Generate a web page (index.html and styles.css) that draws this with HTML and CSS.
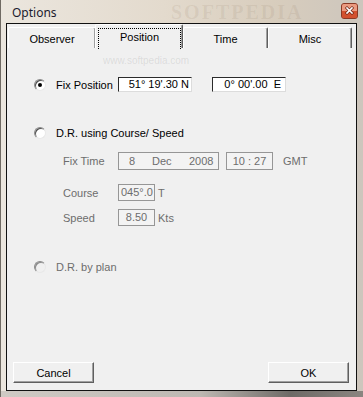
FILE: index.html
```html
<!DOCTYPE html>
<html lang="en">
<head>
  <meta charset="UTF-8">
  <meta name="viewport" content="width=device-width, initial-scale=1.0">
  <title>Options</title>
  <link rel="stylesheet" href="styles.css">
</head>
<body>
  <div class="window">
    <div class="titlebar">
      <span class="title">Options</span>
      <span class="watermark">SOFTPEDIA</span>
      <div class="close">
        <svg width="15" height="14" viewBox="0 0 15 14">
          <rect x="0" y="0" width="15" height="7" fill="#eb9a80"/>
          <rect x="0" y="7" width="15" height="7" fill="#d2512f"/>
          <path d="M5 4 L10 9 M10 4 L5 9" stroke="#6a2414" stroke-width="3" stroke-linecap="square"/>
          <path d="M5 4 L10 9 M10 4 L5 9" stroke="#fff" stroke-width="1.6" stroke-linecap="square"/>
        </svg>
      </div>
    </div>

    <div class="client">
      <div class="tabs">
        <div class="tab tab-first">Observer</div>
        <div class="tab tab-selected"><span class="focus">Position</span></div>
        <div class="tab">Time</div>
        <div class="tab">Misc</div>
      </div>

      <div class="page">
        <span class="mark">www.softpedia.com</span>

        <div class="row row-fix">
          <span class="radio checked"></span>
          <span class="label label-fix">Fix Position</span>
          <span class="field field-pos">51° 19'.30 N</span>
          <span class="field field-pos field-east">0° 00'.00  E</span>
        </div>

        <div class="row row-dr">
          <span class="radio"></span>
          <span class="label">D.R. using Course/ Speed</span>
        </div>

        <div class="row sub row-time">
          <span class="sublabel">Fix Time</span>
          <span class="box box-date">
            <span class="d-day">8</span><span class="d-mon">Dec</span><span class="d-year">2008</span>
          </span>
          <span class="box box-clock">10 : 27</span>
          <span class="unit unit-gmt">GMT</span>
        </div>

        <div class="row sub row-course">
          <span class="sublabel">Course</span>
          <span class="box box-small">045°.0</span>
          <span class="unit">T</span>
        </div>

        <div class="row sub row-speed">
          <span class="sublabel">Speed</span>
          <span class="box box-small box-center">8.50</span>
          <span class="unit">Kts</span>
        </div>

        <div class="row row-plan">
          <span class="radio disabled"></span>
          <span class="label grey">D.R. by plan</span>
        </div>

        <div class="buttons">
          <button class="btn">Cancel</button>
          <button class="btn">OK</button>
        </div>
      </div>
    </div>
  </div>
</body>
</html>
```

FILE: styles.css
```css
html, body {
  margin: 0;
  padding: 0;
}
body {
  width: 363px;
  height: 397px;
  overflow: hidden;
  font-family: 'Liberation Sans', Arial, sans-serif;
  font-size: 11px;
  color: #000;
}
.window {
  width: 363px;
  height: 397px;
  box-sizing: border-box;
  display: flex;
  flex-direction: column;
  border-left: 1px solid #6f6a63;
  background: linear-gradient(to right, #ebe6de 0, #e3dacd 45%, #d8cdbd 75%, #cdc6bd 100%);
  position: relative;
}
.window::after {
  content: "";
  position: absolute;
  left: 0;
  right: 0;
  bottom: 0;
  height: 6px;
  background: linear-gradient(to right, #cfcac4 0, #bdb8b2 55%, #6d6a66 80%, #8a8580 100%);
}
.titlebar {
  height: 23px;
  display: flex;
  align-items: center;
  position: relative;
}
.title {
  font-family: 'Noto Sans', 'Open Sans', sans-serif;
  font-size: 12px;
  color: #1b1b2e;
  margin-left: 11px;
  margin-top: 1px;
}
.watermark {
  position: absolute;
  left: 170px;
  top: 2px;
  font-family: 'Liberation Serif', serif;
  font-size: 20px;
  line-height: 20px;
  font-weight: bold;
  letter-spacing: 2px;
  color: rgba(120, 95, 70, 0.1);
}
.close {
  margin-left: auto;
  margin-right: 5px;
  margin-top: -2px;
  width: 17px;
  height: 16px;
  box-sizing: border-box;
  border: 1px solid #8a3a26;
  border-radius: 3px;
  overflow: hidden;
  background: #d65c3e;
}
.close svg {
  display: block;
}
.client {
  margin-left: 5px;
  width: 351px;
  height: 368px;
  box-sizing: border-box;
  border: 1px solid #111;
  background: #f0f0f0;
  display: flex;
  flex-direction: column;
  position: relative;
  z-index: 1;
}
.tabs {
  height: 24px;
  display: flex;
  align-items: flex-end;
  padding-left: 1px;
}
.tab {
  height: 21px;
  box-sizing: border-box;
  border-top: 1px solid #fff;
  border-left: 1px solid #fff;
  border-right: 1px solid #5f5f5f;
  box-shadow: inset -1px 0 #a0a0a0;
  border-radius: 2px 2px 0 0;
  text-align: center;
  line-height: 22px;
  width: 85px;
  background: #f0f0f0;
}
.tab-first {
  width: 88px;
}
.tab-selected {
  width: 88px;
  height: 24px;
  margin-left: -1px;
  padding: 3px 1px 0 2px;
  position: relative;
  z-index: 1;
}
.tab:last-child {
  width: 84px;
}
.focus {
  display: block;
  height: 21px;
  box-sizing: border-box;
  border: 1px dotted #000;
  border-bottom: none;
  line-height: 16px;
}
.page {
  flex: 1;
  display: flex;
  flex-direction: column;
  position: relative;
}
.mark {
  position: absolute;
  left: 96px;
  top: 7px;
  font-size: 10px;
  color: rgba(120, 120, 120, 0.18);
}
.row {
  display: flex;
  align-items: center;
  padding-left: 27px;
}
.radio {
  width: 12px;
  height: 12px;
  box-sizing: border-box;
  border-radius: 50%;
  border: 1px solid;
  border-color: #8a8a8a #e8e8e8 #e8e8e8 #8a8a8a;
  box-shadow: inset 1px 1px #505050;
  background: #fff;
  margin-right: 10px;
  position: relative;
  flex: none;
}
.radio.checked::after {
  content: "";
  position: absolute;
  left: 3px;
  top: 3px;
  width: 4px;
  height: 4px;
  border-radius: 50%;
  background: #000;
}
.radio.disabled {
  background: #f0f0f0;
  box-shadow: inset 1px 1px #8a8a8a;
}
.label {
  white-space: nowrap;
}
.label-fix {
  width: 62px;
}
.grey {
  color: #6d6d6d;
}
.row-fix {
  margin-top: 29px;
  height: 15px;
}
.field {
  height: 15px;
  width: 74px;
  box-sizing: border-box;
  background: #fff;
  border: 1px solid;
  border-color: #2b2b2b #dcdcdc #dcdcdc #2b2b2b;
  text-align: right;
  padding-right: 2px;
  line-height: 13px;
  white-space: pre;
}
.field-east {
  margin-left: 20px;
  padding-right: 4px;
}
.row-dr {
  margin-top: 34px;
  height: 13px;
}
.sub {
  padding-left: 56px;
  color: #6d6d6d;
}
.sublabel {
  width: 55px;
}
.box {
  box-sizing: border-box;
  border: 1px solid #969696;
  background: #f3f3f3;
  white-space: pre;
  color: #6d6d6d;
}
.row-time {
  margin-top: 13px;
  height: 18px;
}
.box-date {
  width: 101px;
  height: 18px;
  display: flex;
  align-items: center;
}
.d-day {
  margin-left: 10px;
  width: 23px;
}
.d-mon {
  width: 37px;
}
.box-clock {
  width: 47px;
  height: 18px;
  margin-left: 7px;
  line-height: 16px;
  text-align: center;
}
.unit {
  margin-left: 3px;
}
.unit-gmt {
  margin-left: 10px;
}
.row-course {
  margin-top: 14px;
  height: 17px;
}
.row-speed {
  margin-top: 8px;
  height: 17px;
}
.box-small {
  width: 37px;
  height: 17px;
  line-height: 15px;
  padding-left: 2px;
}
.box-center {
  text-align: center;
  padding-left: 0;
}
.row-plan {
  margin-top: 34px;
  height: 13px;
}
.buttons {
  margin-top: auto;
  margin-bottom: 7px;
  display: flex;
  justify-content: space-between;
  padding: 0 7px 0 6px;
}
.btn {
  width: 81px;
  height: 21px;
  box-sizing: border-box;
  padding: 0;
  font-family: 'Liberation Sans', Arial, sans-serif;
  font-size: 11px;
  color: #000;
  background: #f0f0f0;
  border: 1px solid;
  border-color: #fff #5f5f5f #5f5f5f #fff;
  box-shadow: inset -1px -1px #a0a0a0;
}
```
